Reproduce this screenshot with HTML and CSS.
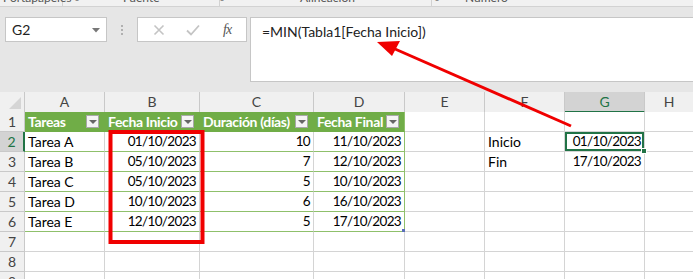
FILE: index.html
```html
<!DOCTYPE html>
<html lang="es">
<head>
<meta charset="utf-8">
<link rel="stylesheet" href="styles.css">
</head>
<body>
<div class="page">
  <div class="ribbon-strip">
    <div class="rgroup g1"><span class="rlabel">Portapapeles</span><span class="launch">⌟</span></div>
    <div class="rgroup g2"><span class="rlabel">Fuente</span><span class="launch">⌟</span></div>
    <div class="rgroup g3"><span class="rlabel">Alineación</span><span class="launch">⌟</span></div>
    <div class="rgroup g4"><span class="rlabel">Número</span></div>
  </div>

  <div class="formula-row">
    <div class="namebox"><span>G2</span><svg class="nb-arrow" width="8" height="5" viewBox="0 0 8 5"><path d="M0 0H8L4 4.5Z" fill="#777"/></svg></div>
    <div class="dots"><i></i><i></i><i></i></div>
    <div class="fbuttons">
      <svg class="fbtn" width="12" height="12" viewBox="0 0 12 12"><path d="M1.5 1.5L10.5 10.5M10.5 1.5L1.5 10.5" stroke="#c4c4c4" stroke-width="1.6"/></svg>
      <svg class="fbtn" width="14" height="12" viewBox="0 0 14 12"><path d="M1 6.5L5 10.5L13 1.5" stroke="#c4c4c4" stroke-width="1.8" fill="none"/></svg>
      <span class="fx">fx</span>
    </div>
    <div class="fbar">=MIN(Tabla1[Fecha Inicio])</div>
  </div>

  <div class="grid">
    <div class="row hdr">
      <div class="c rh corner"><span class="tri"></span></div>
      <div class="c ch">A</div><div class="c ch">B</div><div class="c ch">C</div><div class="c ch">D</div>
      <div class="c ch">E</div><div class="c ch">F</div><div class="c ch sel">G</div><div class="c ch last">H</div>
    </div>
    <div class="row">
      <div class="c rh">1</div>
      <div class="c th">Tareas<span class="flt"></span></div>
      <div class="c th">Fecha Inicio<span class="flt"></span></div>
      <div class="c th">Duración (días)<span class="flt"></span></div>
      <div class="c th tr">Fecha Final<span class="flt"></span></div>
      <div class="c"></div><div class="c"></div><div class="c"></div><div class="c last"></div>
    </div>
    <div class="row">
      <div class="c rh selr">2</div>
      <div class="c td">Tarea A</div><div class="c td n">01/10/2023</div><div class="c td n">10</div><div class="c td n tr">11/10/2023</div>
      <div class="c"></div><div class="c">Inicio</div><div class="c n active">01/10/2023<span class="handle"></span></div><div class="c last"></div>
    </div>
    <div class="row">
      <div class="c rh">3</div>
      <div class="c td">Tarea B</div><div class="c td n">05/10/2023</div><div class="c td n">7</div><div class="c td n tr">12/10/2023</div>
      <div class="c"></div><div class="c">Fin</div><div class="c n">17/10/2023</div><div class="c last"></div>
    </div>
    <div class="row">
      <div class="c rh">4</div>
      <div class="c td">Tarea C</div><div class="c td n">05/10/2023</div><div class="c td n">5</div><div class="c td n tr">10/10/2023</div>
      <div class="c"></div><div class="c"></div><div class="c"></div><div class="c last"></div>
    </div>
    <div class="row">
      <div class="c rh">5</div>
      <div class="c td">Tarea D</div><div class="c td n">10/10/2023</div><div class="c td n">6</div><div class="c td n tr">16/10/2023</div>
      <div class="c"></div><div class="c"></div><div class="c"></div><div class="c last"></div>
    </div>
    <div class="row">
      <div class="c rh">6</div>
      <div class="c td">Tarea E</div><div class="c td n">12/10/2023</div><div class="c td n">5</div><div class="c td n tr corner-mark">17/10/2023</div>
      <div class="c"></div><div class="c"></div><div class="c"></div><div class="c last"></div>
    </div>
    <div class="row">
      <div class="c rh">7</div>
      <div class="c"></div><div class="c"></div><div class="c"></div><div class="c"></div>
      <div class="c"></div><div class="c"></div><div class="c"></div><div class="c last"></div>
    </div>
    <div class="row">
      <div class="c rh">8</div>
      <div class="c"></div><div class="c"></div><div class="c"></div><div class="c"></div>
      <div class="c"></div><div class="c"></div><div class="c"></div><div class="c last"></div>
    </div>
    <div class="row">
      <div class="c rh">9</div>
      <div class="c"></div><div class="c"></div><div class="c"></div><div class="c"></div>
      <div class="c"></div><div class="c"></div><div class="c"></div><div class="c last"></div>
    </div>
  </div>

  <svg class="annot" width="693" height="279" viewBox="0 0 693 279">
    <rect x="110.5" y="132" width="92" height="110" fill="none" stroke="#f00000" stroke-width="4"/>
    <line x1="571" y1="126" x2="395" y2="49" stroke="#f00000" stroke-width="3"/>
    <path d="M377 42L400 41L392 56Z" fill="#f00000"/>
  </svg>
</div>
</body>
</html>
```

FILE: styles.css
```css
* { box-sizing: border-box; }
html, body { margin: 0; padding: 0; }
body {
  background: #e6e6e6;
  font-family: Lato, "Liberation Sans", sans-serif;
  color: #000;
  width: 693px;
  height: 279px;
  overflow: hidden;
}
.page { position: relative; width: 693px; height: 279px; }

.ribbon-strip {
  height: 7px;
  background: #f1f1f1;
  border-bottom: 1px solid #d2d2d2;
  display: flex;
  overflow: hidden;
}
.rgroup {
  position: relative;
  height: 6px;
  display: flex;
  font-size: 12px;
  line-height: 14px;
  color: #555;
}
.rgroup .rlabel { margin-top: -9px; white-space: nowrap; }
.rgroup .launch { margin-top: -10px; font-size: 9px; color: #777; }
.g1 { width: 63px; padding-left: 3px; border-right: 1px solid #d2d2d2; }
.g1 .launch { margin-left: 4px; }
.g2 { width: 157px; padding-left: 60px; border-right: 1px solid #d2d2d2; }
.g2 .launch { margin-left: 60px; }
.g3 { width: 212px; padding-left: 80px; border-right: 1px solid #d2d2d2; }
.g3 .launch { margin-left: 80px; }
.g4 { padding-left: 33px; }

.formula-row {
  display: flex;
  align-items: flex-start;
  padding-top: 10px;
  height: 85px;
}
.namebox {
  margin-left: 5px;
  width: 102px;
  height: 25px;
  background: #fff;
  border: 1px solid #c6c6c6;
  display: flex;
  align-items: center;
  justify-content: space-between;
  padding: 0 6px 0 6px;
  font-size: 14px;
  color: #222;
}
.nb-arrow { margin-top: 1px; }
.dots {
  width: 30px;
  height: 25px;
  display: flex;
  flex-direction: column;
  align-items: center;
  justify-content: center;
  gap: 2px;
}
.dots i { display: block; width: 2px; height: 2px; background: #b0b0b0; }
.fbuttons {
  width: 110px;
  height: 25px;
  background: #fff;
  border: 1px solid #c6c6c6;
  display: flex;
  align-items: center;
  padding-left: 15px;
  gap: 21px;
}
.fx {
  font-family: "Liberation Serif", "DejaVu Serif", serif;
  font-style: italic;
  font-size: 14px;
  color: #555;
  margin-left: 2px;
  letter-spacing: -1px;
}
.fbar {
  margin-left: 3px;
  flex: 1;
  height: 65px;
  background: #fff;
  border: 1px solid #c6c6c6;
  border-right: none;
  padding: 5px 0 0 11px;
  font-size: 14px;
  color: #222;
}

.grid { display: flex; flex-direction: column; }
.row {
  display: grid;
  grid-template-columns: 25px 80px 95px 114px 91px 80px 80px 80px 48px;
  height: 20px;
}
.c {
  position: relative;
  background: #fff;
  border-right: 1px solid #d4d4d4;
  border-bottom: 1px solid #d4d4d4;
  font-size: 14px;
  line-height: 19px;
  padding: 0 3px;
  white-space: nowrap;
  overflow: visible;
}
.c.last { border-right: none; }
.c.n {
  text-align: right;
  padding-right: 3px;
  font-size: 13.5px;
  letter-spacing: -0.65px;
}

.rh {
  background: #f0f0f0;
  border-color: #c9c9c9;
  text-align: center;
  color: #444;
  padding: 0;
}
.corner { position: relative; }
.corner .tri {
  position: absolute;
  right: 3px;
  bottom: 3px;
  width: 0; height: 0;
  border-left: 12px solid transparent;
  border-bottom: 12px solid #d5d5d5;
}
.ch {
  background: #f0f0f0;
  border-color: #c9c9c9;
  text-align: center;
  color: #444;
}
.ch.sel {
  background: #d3d3d3;
  color: #217346;
  border-bottom: 2px solid #217346;
}
.rh.selr {
  background: #d3d3d3;
  color: #217346;
  border-right: 2px solid #217346;
}

.th {
  background: #70ad47;
  color: #fff;
  font-weight: bold;
  border-right-color: #70ad47;
  border-bottom-color: #70ad47;
  padding-left: 3px;
  letter-spacing: -0.35px;
  overflow: hidden;
}
.flt {
  position: absolute;
  right: 5px;
  top: 3px;
  width: 13px;
  height: 13px;
  background: #f4f4f4;
  border: 1px solid #a8a8a8;
}
.flt::after {
  content: "";
  position: absolute;
  left: 2px;
  top: 4px;
  border-left: 4px solid transparent;
  border-right: 4px solid transparent;
  border-top: 4px solid #666;
}
.td { border-bottom-color: #8fc06b; }
.tr { border-right-color: #8fc06b; }
.th.tr { border-right-color: #8fc06b; }
.corner-mark::after {
  content: "";
  position: absolute;
  right: -1px;
  bottom: -1px;
  width: 3px;
  height: 3px;
  background: #5a6fb8;
}

.active {
  box-shadow: inset 0 0 0 2px #217346;
}
.active .handle {
  position: absolute;
  right: -3px;
  bottom: -3px;
  width: 6px;
  height: 6px;
  background: #217346;
  border: 1px solid #fff;
  z-index: 2;
}

.annot {
  position: absolute;
  left: 0;
  top: 0;
  pointer-events: none;
  z-index: 5;
}
```
